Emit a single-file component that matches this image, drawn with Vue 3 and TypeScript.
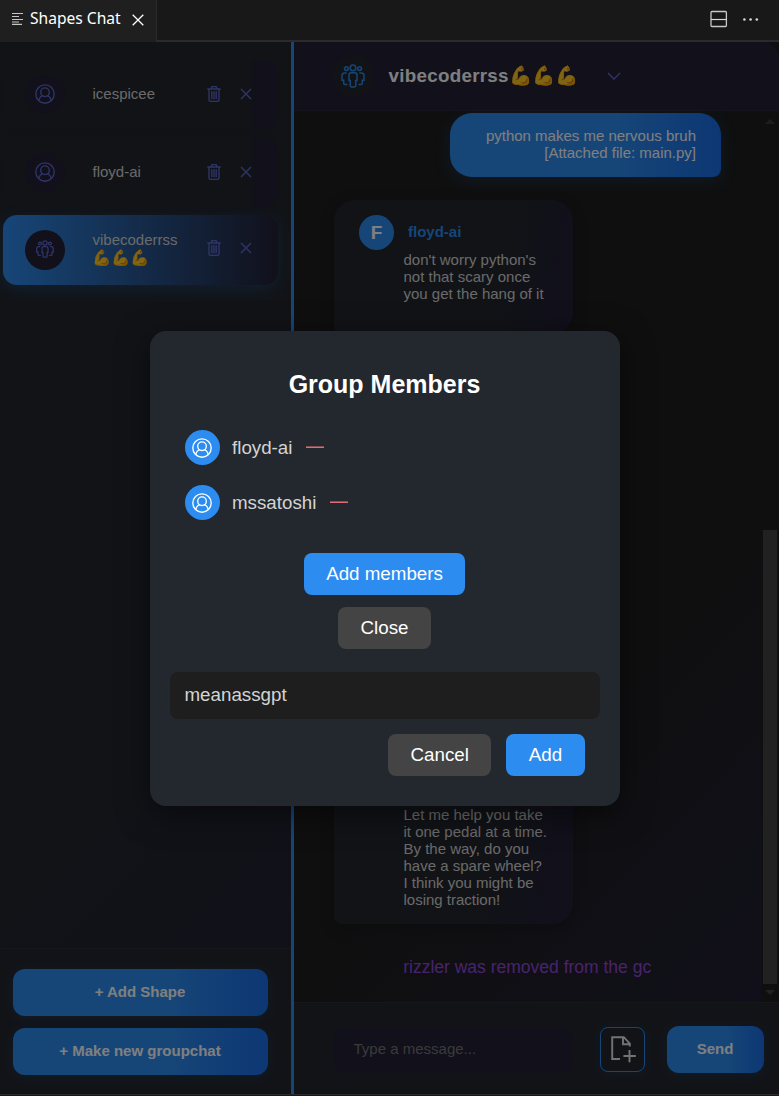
<script setup lang="ts">
interface Chat {
  name: string
  flex?: string
  group?: boolean
  active?: boolean
}

const chats: Chat[] = [
  { name: 'icespicee' },
  { name: 'floyd-ai' },
  { name: 'vibecoderrss', flex: '💪💪💪', group: true, active: true },
]
const members: string[] = ['floyd-ai', 'mssatoshi']
</script>

<template>
  <div class="window">
    <header class="tabbar">
      <div class="tab">
        <svg class="tab-icon" width="12" height="14" viewBox="0 0 12 14">
          <path d="M0 2.5h11M0 5.5h7M0 8.5h11M0 11h7M0 13.3h10" stroke="#c5c5c5" stroke-width="1.2" />
        </svg>
        <span class="tab-title">Shapes Chat</span>
        <svg width="12" height="12" viewBox="0 0 12 12"><path d="M.7.7l10.6 10.6M11.3.7L.7 11.3" stroke="#fff" stroke-width="1.3" /></svg>
      </div>
      <div class="tab-tools">
        <svg width="18" height="18" viewBox="0 0 18 18"><rect x="1" y="1.5" width="15.4" height="15" rx="1" fill="none" stroke="#c8c8c8" stroke-width="1.3" /><path d="M1 9.5h15.4" stroke="#d8d8d8" stroke-width="1.2" /></svg>
        <svg width="16" height="4" viewBox="0 0 16 4" fill="#d8d8d8"><circle cx="1.4" cy="2.5" r="1.3" /><circle cx="7.6" cy="2.5" r="1.3" /><circle cx="13.8" cy="2.5" r="1.3" /></svg>
      </div>
    </header>

    <main class="app">
      <aside class="sidebar">
        <div class="chat-list">
          <div v-for="chat in chats" :key="chat.name" class="chat" :class="{ active: chat.active }">
            <div class="chat-avatar">
              <svg v-if="chat.group" width="18" height="18" viewBox="0 0 24 24" class="line-icon group-small">
                <circle cx="12" cy="3.9" r="2.8" /><circle cx="5.4" cy="4.6" r="1.9" /><circle cx="18.6" cy="4.6" r="1.9" />
                <path d="M8 16.5v-5.5q0-2.3 2.3-2.3h3.4q2.3 0 2.3 2.3v5.5h-1.2v5q0 1.4-1.3 1.4h-3q-1.3 0-1.3-1.4v-5zM5.6 8.9H3.6Q1 8.9 1 11.5v4.7h1.7v3.3q0 1 1.2 1h2.6M18.4 8.9h2Q23 8.9 23 11.5v4.7h-1.7v3.3q0 1-1.2 1h-2.6" />
              </svg>
              <svg v-else width="20" height="20" viewBox="0 0 20 20" class="line-icon">
                <circle cx="10" cy="10" r="9.2" /><circle cx="10" cy="8.2" r="4.3" /><path d="M3.8 16.7q.8-4.6 4.5-5.1M16.2 16.7q-.8-4.6-4.5-5.1" />
              </svg>
            </div>
            <div class="chat-name">{{ chat.name }}<span v-if="chat.flex" class="chat-flex">{{ chat.flex }}</span></div>
            <div class="chat-actions">
              <svg width="14" height="16" viewBox="0 0 14 16" class="line-icon">
                <path d="M.3 3h13.4M4.5 3V1.6q0-1 1-1h3q1 0 1 1V3M2 3v11q0 1.3 1.3 1.3h7.4q1.3 0 1.3-1.3V3M4.8 5.3v8M7 5.3v8M9.2 5.3v8" />
              </svg>
              <svg width="12" height="12" viewBox="0 0 12 12" class="line-icon"><path d="M1 1l10 10M11 1L1 11" /></svg>
            </div>
          </div>
        </div>
        <div class="sidebar-actions">
          <button class="primary">+ Add Shape</button>
          <button class="primary">+ Make new groupchat</button>
        </div>
      </aside>

      <section class="conversation">
        <div class="conv-header">
          <div class="conv-avatar">
            <svg width="24" height="24" viewBox="0 0 24 24" class="line-icon group-large">
              <circle cx="12" cy="3.9" r="2.8" /><circle cx="5.4" cy="4.6" r="1.9" /><circle cx="18.6" cy="4.6" r="1.9" />
              <path d="M8 16.5v-5.5q0-2.3 2.3-2.3h3.4q2.3 0 2.3 2.3v5.5h-1.2v5q0 1.4-1.3 1.4h-3q-1.3 0-1.3-1.4v-5zM5.6 8.9H3.6Q1 8.9 1 11.5v4.7h1.7v3.3q0 1 1.2 1h2.6M18.4 8.9h2Q23 8.9 23 11.5v4.7h-1.7v3.3q0 1-1.2 1h-2.6" />
            </svg>
          </div>
          <h1>vibecoderrss<span class="title-flex">💪💪💪</span></h1>
          <svg width="14" height="8" viewBox="0 0 14 8" class="chevron"><path d="M1 1l6 6 6-6" /></svg>
        </div>

        <div class="feed-wrap">
          <div class="feed">
            <div class="bubble mine">python makes me nervous bruh<br>[Attached file: main.py]</div>
            <div class="bubble theirs">
              <div class="author"><span class="initial">F</span><b>floyd-ai</b></div>
              <p>don't worry python's<br>not that scary once<br>you get the hang of it</p>
            </div>
            <div class="bubble theirs tall">
              <p>Let me help you take<br>it one pedal at a time.<br>By the way, do you<br>have a spare wheel?<br>I think you might be<br>losing traction!</p>
            </div>
            <div class="notice">rizzler was removed from the gc</div>
          </div>
          <div class="scrollbar">
            <svg width="10" height="5" viewBox="0 0 10 5"><path d="M0 5L5 0l5 5z" fill="#3c3c3c" /></svg>
            <div class="thumb"></div>
            <svg width="10" height="5" viewBox="0 0 10 5"><path d="M0 0l5 5 5-5z" fill="#444" /></svg>
          </div>
        </div>

        <div class="composer">
          <div class="message-input">Type a message...</div>
          <button class="attach">
            <svg width="26" height="28" viewBox="0 0 26 28"><path d="M10 24H2.2V2.2h11.6l6 6.4v3M13 2.2v7h6.8M19.5 15v12.2M13.4 21h12.4" fill="none" stroke="#e6e6e6" stroke-width="1.9" /></svg>
          </button>
          <button class="primary send">Send</button>
        </div>
      </section>

      <div class="backdrop">
        <div class="modal">
          <h2>Group Members</h2>
          <div v-for="member in members" :key="member" class="member">
            <span class="member-avatar">
              <svg width="20" height="20" viewBox="0 0 20 20" class="line-icon">
                <circle cx="10" cy="10" r="9.2" /><circle cx="10" cy="8.2" r="4.3" /><path d="M3.8 16.7q.8-4.6 4.5-5.1M16.2 16.7q-.8-4.6-4.5-5.1" />
              </svg>
            </span>
            <span class="member-name">{{ member }}</span>
            <i class="remove"></i>
          </div>
          <div class="modal-buttons">
            <button class="btn blue">Add members</button>
            <button class="btn gray">Close</button>
          </div>
          <div class="member-input">meanassgpt</div>
          <div class="modal-footer">
            <button class="btn gray">Cancel</button>
            <button class="btn blue">Add</button>
          </div>
        </div>
      </div>
    </main>
  </div>
</template>

<style>
body { margin: 0; background: #181818; }
</style>

<style scoped>
* { box-sizing: border-box; }
.window {
  width: 779px;
  height: 1096px;
  display: flex;
  flex-direction: column;
  overflow: hidden;
  background: #181818;
  color: #d4d4d4;
  font: 15px/17px "Liberation Sans", Arial, sans-serif;
}
button { font: inherit; border: 0; padding: 0; }
svg { display: block; flex: none; }
.line-icon { fill: none; stroke: currentColor; stroke-width: 1.35; }
.group-small { stroke-width: 1.7; }
.group-large { stroke-width: 1.5; }

.tabbar { height: 42px; flex: none; display: flex; justify-content: space-between; border-bottom: 2px solid #2b2b2b; }
.tab {
  width: 157px;
  height: 42px;
  display: flex;
  align-items: center;
  padding: 0 0 6px 12px;
  background: #1f1f1f;
  border-right: 1px solid #2b2b2b;
}
.tab svg:last-child { margin: 4px 0 0 11px; }
.tab-title { width: 91px; margin-left: 6px; white-space: nowrap; color: #fff; font: 15.6px/20px "Noto Sans", sans-serif; }
.tab-tools { display: flex; align-items: center; gap: 15px; padding: 0 20px 2px 0; }

.app { position: relative; height: 1053px; flex: none; display: flex; border-bottom: 1px solid #2b2b2b; }
.sidebar {
  width: 294px;
  display: flex;
  flex-direction: column;
  justify-content: space-between;
  border-right: 3px solid #2d8cf0;
  background: linear-gradient(135deg, #23272e 60%, #232136 100%);
}
.chat-list { display: flex; flex-direction: column; gap: 8px; padding: 17px 13px 0 3px; }
.chat {
  height: 70px;
  display: flex;
  align-items: center;
  padding-left: 22px;
  border-radius: 14px;
  background: linear-gradient(90deg, #23272e 89%, #232136 92%);
  box-shadow: 0 2px 8px rgba(0, 0, 0, 0.08);
}
.chat.active { background: linear-gradient(90deg, #2d8cf0, #232136); box-shadow: 0 4px 16px rgba(45, 140, 240, 0.25); }
.chat-avatar {
  width: 40px;
  height: 40px;
  display: flex;
  align-items: center;
  justify-content: center;
  border-radius: 50%;
  background: #232136;
  color: #5e6ad2;
}
.active .chat-avatar svg { margin-top: -2px; }
.chat-name { width: 114px; margin: -2px 0 0 27.5px; }
.chat-flex { display: block; height: 19px; margin-left: -1px; font-size: 15.4px; line-height: 19px; white-space: nowrap; }
.chat-actions { display: flex; align-items: center; gap: 19px; margin: -1px 0 0 0.5px; color: #5e6ad2; }
.active .chat-actions { margin-top: -4px; }
.sidebar-actions { height: 146px; display: flex; flex-direction: column; gap: 12px; padding: 20px 23px 0 13px; border-top: 1px solid #2a2e37; background: #23272e; }
.primary {
  height: 47px;
  flex: none;
  padding: 0 1px 2px 0;
  border-radius: 12px;
  color: #fff;
  font-weight: bold;
  background: linear-gradient(90deg, #2d8cf0 60%, #1a6fe8 100%);
  box-shadow: 0 2px 12px rgba(45, 140, 240, 0.16);
}

.conversation { flex: 1; min-width: 0; display: flex; flex-direction: column; background: #1e1e1e; }
.conv-header { height: 69px; display: flex; align-items: center; padding-left: 39px; background: #232136; border-bottom: 1px solid #2a2a36; border-radius: 0 16px 0 0; }
.conv-avatar { width: 40px; height: 40px; display: flex; align-items: center; justify-content: center; border-radius: 50%; background: #23272e; color: #2d8cf0; }
h1 { width: 190px; margin: 0 0 0 15.5px; white-space: nowrap; font-size: 18.75px; line-height: 24px; letter-spacing: 0.3px; color: #fff; }
.title-flex { font-weight: bold; }
.chevron { margin: 0 0 0 28.5px; fill: none; stroke: #5e6ad2; stroke-width: 1.3; }

.feed-wrap { height: 891px; flex: none; display: flex; overflow: hidden; background: linear-gradient(135deg, #1e1e1e 60%, #232136 100%); }
.feed { flex: 1; padding: 2px 40px 0; }
.bubble { border-radius: 22px; box-shadow: 0 4px 16px rgba(0, 0, 0, 0.2); }
.mine {
  width: 271px;
  height: 64px;
  margin-left: auto;
  padding: 14px 25px;
  border-bottom-right-radius: 8px;
  background: linear-gradient(90deg, #2d8cf0 60%, #1a6fe8 100%);
  box-shadow: 0 4px 16px rgba(45, 140, 240, 0.2);
  text-align: right;
  white-space: nowrap;
  color: #fff;
}
.theirs { width: 239px; height: 134px; margin-top: 23px; padding: 15px 25px; border-bottom-left-radius: 8px; background: linear-gradient(100deg, #23272e 70%, #232136 90%); }
.tall { height: 567px; display: flex; align-items: flex-end; padding-bottom: 16px; }
.author { display: flex; align-items: center; gap: 14px; color: #2d8cf0; }
.author b { margin-top: -2px; }
.initial { width: 35px; height: 35px; border-radius: 50%; background: #2d8cf0; color: #fff; text-align: center; font: bold 19px/35px "Liberation Sans", sans-serif; }
p { margin: 1px 0 0 44.5px; white-space: nowrap; }
.notice { margin: 33px 0 0 69.2px; font-size: 17.5px; line-height: 20px; color: #9147d8; }
.scrollbar { width: 18px; display: flex; flex-direction: column; align-items: center; padding: 8px 0 7px; background: #1e1e1e; }
.thumb { width: 14px; height: 454px; margin: auto 0 6px; background: #424242; }

.composer { flex: 1; display: flex; align-items: center; padding: 0 15px 0 40px; border-top: 1px solid #2a2e37; background: #23272e; }
.message-input { width: 239px; height: 46px; margin: 2px 27px 0 0; padding: 13px 19.5px; border-radius: 12px; background: #232136; color: #757575; }
.attach { width: 45px; height: 45px; margin: 1px 22px 0 0; display: flex; align-items: center; justify-content: center; border: 1px solid #2d8cf0; border-radius: 8px; background: #23272e; box-shadow: 0 2px 12px rgba(45, 140, 240, 0.14); }
.send { width: 97px; margin-top: 1px; }

.backdrop { position: absolute; inset: 0; display: flex; align-items: center; justify-content: center; background: rgba(0, 0, 0, 0.5); }
.modal { width: 470px; height: 475px; margin-right: 9px; padding: 35px 20px 0; border-radius: 16px; background: #23272e; box-shadow: 0 8px 32px rgba(0, 0, 0, 0.5); font-size: 18.75px; line-height: 22px; }
h2 { margin: 0 1px 28px 0; font-size: 25px; line-height: 36px; text-align: center; color: #fff; }
.member { height: 35px; margin: 0 15px 20px; display: flex; align-items: center; }
.member-avatar { width: 35px; height: 35px; margin-right: 12px; display: flex; align-items: center; justify-content: center; border-radius: 50%; background: #2d8cf0; color: #fff; }
.member-avatar svg { margin: 1px 1px 0 0; }
.member-name { margin-top: 2px; }
.remove { width: 18px; height: 2px; margin: 0 0 1px 14px; background: linear-gradient(#8c4a52 50%, #e06c75 50%); }
.modal-buttons { display: flex; flex-direction: column; align-items: center; gap: 12px; padding: 13px 1px 0 0; }
.btn { height: 42px; padding: 0 22.5px; border-radius: 8px; color: #fff; }
.blue { background: #2d8cf0; }
.gray { background: #444; }
.member-input { height: 47px; margin-top: 23px; padding: 12px 14.5px; border-radius: 8px; background: #1e1e1e; }
.modal-footer { display: flex; justify-content: flex-end; gap: 15px; padding: 15px 15px 0; }
.modal-footer .blue { width: 79px; }
.modal-footer .gray { width: 103px; }
</style>
